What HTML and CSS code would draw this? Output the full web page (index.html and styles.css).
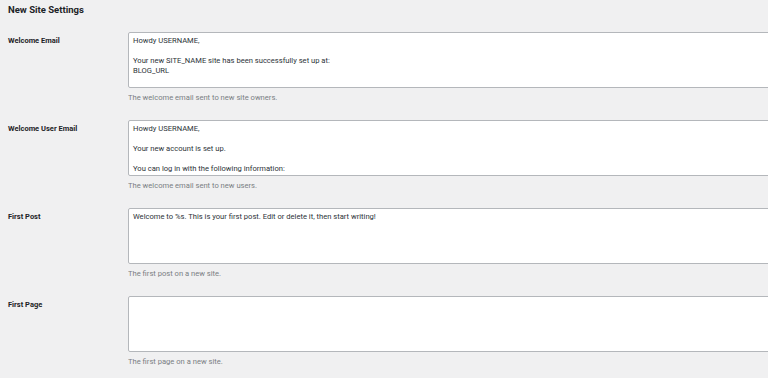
FILE: index.html
```html
<!DOCTYPE html>
<html lang="en">
<head>
    <meta charset="UTF-8">
    <meta name="viewport" content="width=device-width, initial-scale=1.0">
    <title>New Site Settings</title>
    <link rel="stylesheet" href="styles.css">
</head>
<body>

    <div class="wrap">
        <h2 class="section-title">New Site Settings</h2>

        <!-- Settings rows -->
        <div class="form-table">
            <div class="form-row">
                <label class="row-label" for="welcome_email">Welcome Email</label>
                <div class="row-field">
                    <textarea id="welcome_email" class="large-text">Howdy USERNAME,

Your new SITE_NAME site has been successfully set up at:
BLOG_URL

You can log in to the administrator account with the following information:</textarea>
                    <p class="description">The welcome email sent to new site owners.</p>
                </div>
            </div>

            <div class="form-row">
                <label class="row-label" for="welcome_user_email">Welcome User Email</label>
                <div class="row-field">
                    <textarea id="welcome_user_email" class="large-text">Howdy USERNAME,

Your new account is set up.

You can log in with the following information:
Username: USERNAME</textarea>
                    <p class="description">The welcome email sent to new users.</p>
                </div>
            </div>

            <div class="form-row">
                <label class="row-label" for="first_post">First Post</label>
                <div class="row-field">
                    <textarea id="first_post" class="large-text">Welcome to %s. This is your first post. Edit or delete it, then start writing!</textarea>
                    <p class="description">The first post on a new site.</p>
                </div>
            </div>

            <div class="form-row">
                <label class="row-label" for="first_page">First Page</label>
                <div class="row-field">
                    <textarea id="first_page" class="large-text"></textarea>
                    <p class="description">The first page on a new site.</p>
                </div>
            </div>
        </div>
    </div>

</body>
</html>
```

FILE: styles.css
```css
body {
    font-family: Roboto, 'Noto Sans', sans-serif;
    background-color: #f0f0f1;
    color: #1d2327;
    margin: 0;
    padding: 0;
    overflow: hidden;
}

.wrap {
    padding-left: 8px;
}

.section-title {
    font-size: 9.5px;
    font-weight: 700;
    line-height: 12px;
    margin: 0;
    padding-top: 4px;
    color: #1d2327;
}

.form-table {
    margin-top: 16px;
}

.form-row {
    display: flex;
    padding-bottom: 17px;
}

.row-label {
    width: 120px;
    flex-shrink: 0;
    font-size: 7.5px;
    font-weight: 700;
    line-height: 10px;
    padding-top: 4px;
}

/* the fields are wider than the window, so they get cut at the right edge */
.row-field {
    flex: 1;
    min-width: 0;
    overflow: hidden;
}

.large-text {
    display: block;
    box-sizing: border-box;
    width: 700px;
    height: 56px;
    margin: 0;
    padding: 3px 4px;
    font-family: Roboto, 'Noto Sans', sans-serif;
    font-size: 7.6px;
    line-height: 10px;
    color: #2c3338;
    background-color: #ffffff;
    border: 1px solid #b4b7bb;
    border-radius: 2px;
    resize: none;
    overflow: hidden;
}

.description {
    margin: 5px 0 0;
    font-size: 7.6px;
    line-height: 10px;
    color: #7a7e83;
}
```
